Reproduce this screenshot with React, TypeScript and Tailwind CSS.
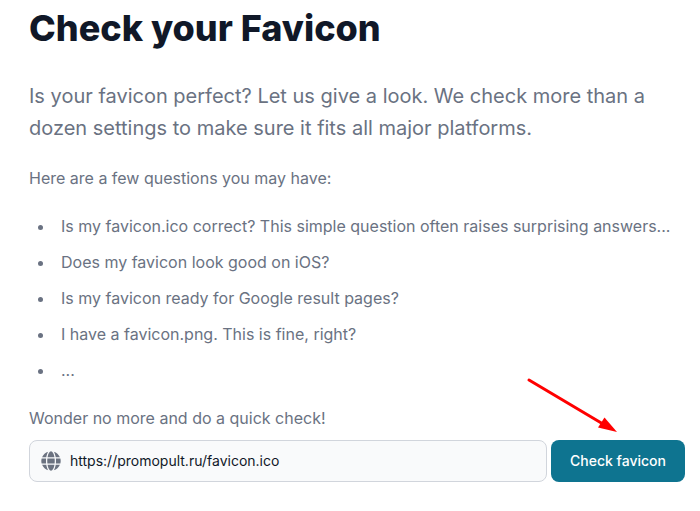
const questions = [
  "Is my favicon.ico correct? This simple question often raises surprising answers...",
  "Does my favicon look good on iOS?",
  "Is my favicon ready for Google result pages?",
  "I have a favicon.png. This is fine, right?",
  "...",
];

function GlobeIcon() {
  return (
    <svg viewBox="0 0 496 512" className="h-5 w-5 shrink-0" fill="#6b7280" aria-hidden="true">
      <path d="M336.5 160C322 70.7 287.8 8 248 8s-74 62.7-88.5 152h177zM152 256c0 22.2 1.2 43.5 3.3 64h185.3c2.1-20.5 3.3-41.8 3.3-64s-1.2-43.5-3.3-64H155.3c-2.1 20.5-3.3 41.8-3.3 64zm324.7-96c-28.6-67.9-86.5-120.4-158-141.6 24.4 33.8 41.2 84.7 50 141.6h108zM177.2 18.4C105.8 39.6 47.8 92.1 19.3 160h108c8.7-56.9 25.5-107.8 49.9-141.6zM487.4 192H372.7c2.1 21 3.3 42.5 3.3 64s-1.2 43-3.3 64h114.6c5.5-20.5 8.6-41.8 8.6-64s-3.1-43.5-8.5-64zM120 256c0-21.5 1.2-43 3.3-64H8.6C3.2 212.5 0 233.8 0 256s3.2 43.5 8.6 64h114.6c-2-21-3.2-42.5-3.2-64zm39.5 96c14.5 89.3 48.7 152 88.5 152s74-62.7 88.5-152h-177zm159.3 141.6c71.4-21.2 129.4-73.7 158-141.6h-108c-8.8 56.9-25.6 107.8-50 141.6zM19.3 352c28.6 67.9 86.5 120.4 158 141.6-24.4-33.8-41.2-84.7-50-141.6h-108z" />
    </svg>
  );
}

export default function App() {
  return (
    <main className="relative h-[511px] w-[700px] overflow-hidden bg-white pl-[29px] pt-[8px] font-['Inter',sans-serif] text-base text-gray-500">
      <h1 className="text-4xl font-extrabold leading-10 text-gray-900">Check your Favicon</h1>
      <p className="mt-8 w-[640px] text-xl leading-8">
        Is your favicon perfect? Let us give a look. We check more than a dozen settings to make sure it fits all major platforms.
      </p>
      <p className="mt-5 leading-7">Here are a few questions you may have:</p>
      <ul className="mt-5 flex list-disc flex-col gap-2 pl-[26px]">
        {questions.map((q) => (
          <li key={q} className="whitespace-nowrap pl-1.5 leading-7">{q}</li>
        ))}
      </ul>
      <p className="mt-5 leading-7">Wonder no more and do a quick check!</p>
      <div className="mt-2 flex gap-1">
        <div className="flex h-[42px] w-[518px] items-center gap-[9px] rounded-lg border border-gray-300 bg-gray-50 pl-[11px] pr-2.5 text-sm text-gray-900">
          <GlobeIcon />
          <span>https://promopult.ru/favicon.ico</span>
        </div>
        <button className="h-[42px] w-[134px] rounded-lg bg-[#0e7490] text-sm font-medium text-white">Check favicon</button>
      </div>
      <svg className="absolute left-0 top-0 h-[511px] w-[700px]" aria-hidden="true">
        <path d="M529 380L603 424" stroke="#ff0000" strokeWidth="3" strokeLinecap="round" />
        <path d="M617 432L598 427.5L604.5 417.5Z" fill="#ff0000" />
      </svg>
    </main>
  );
}
